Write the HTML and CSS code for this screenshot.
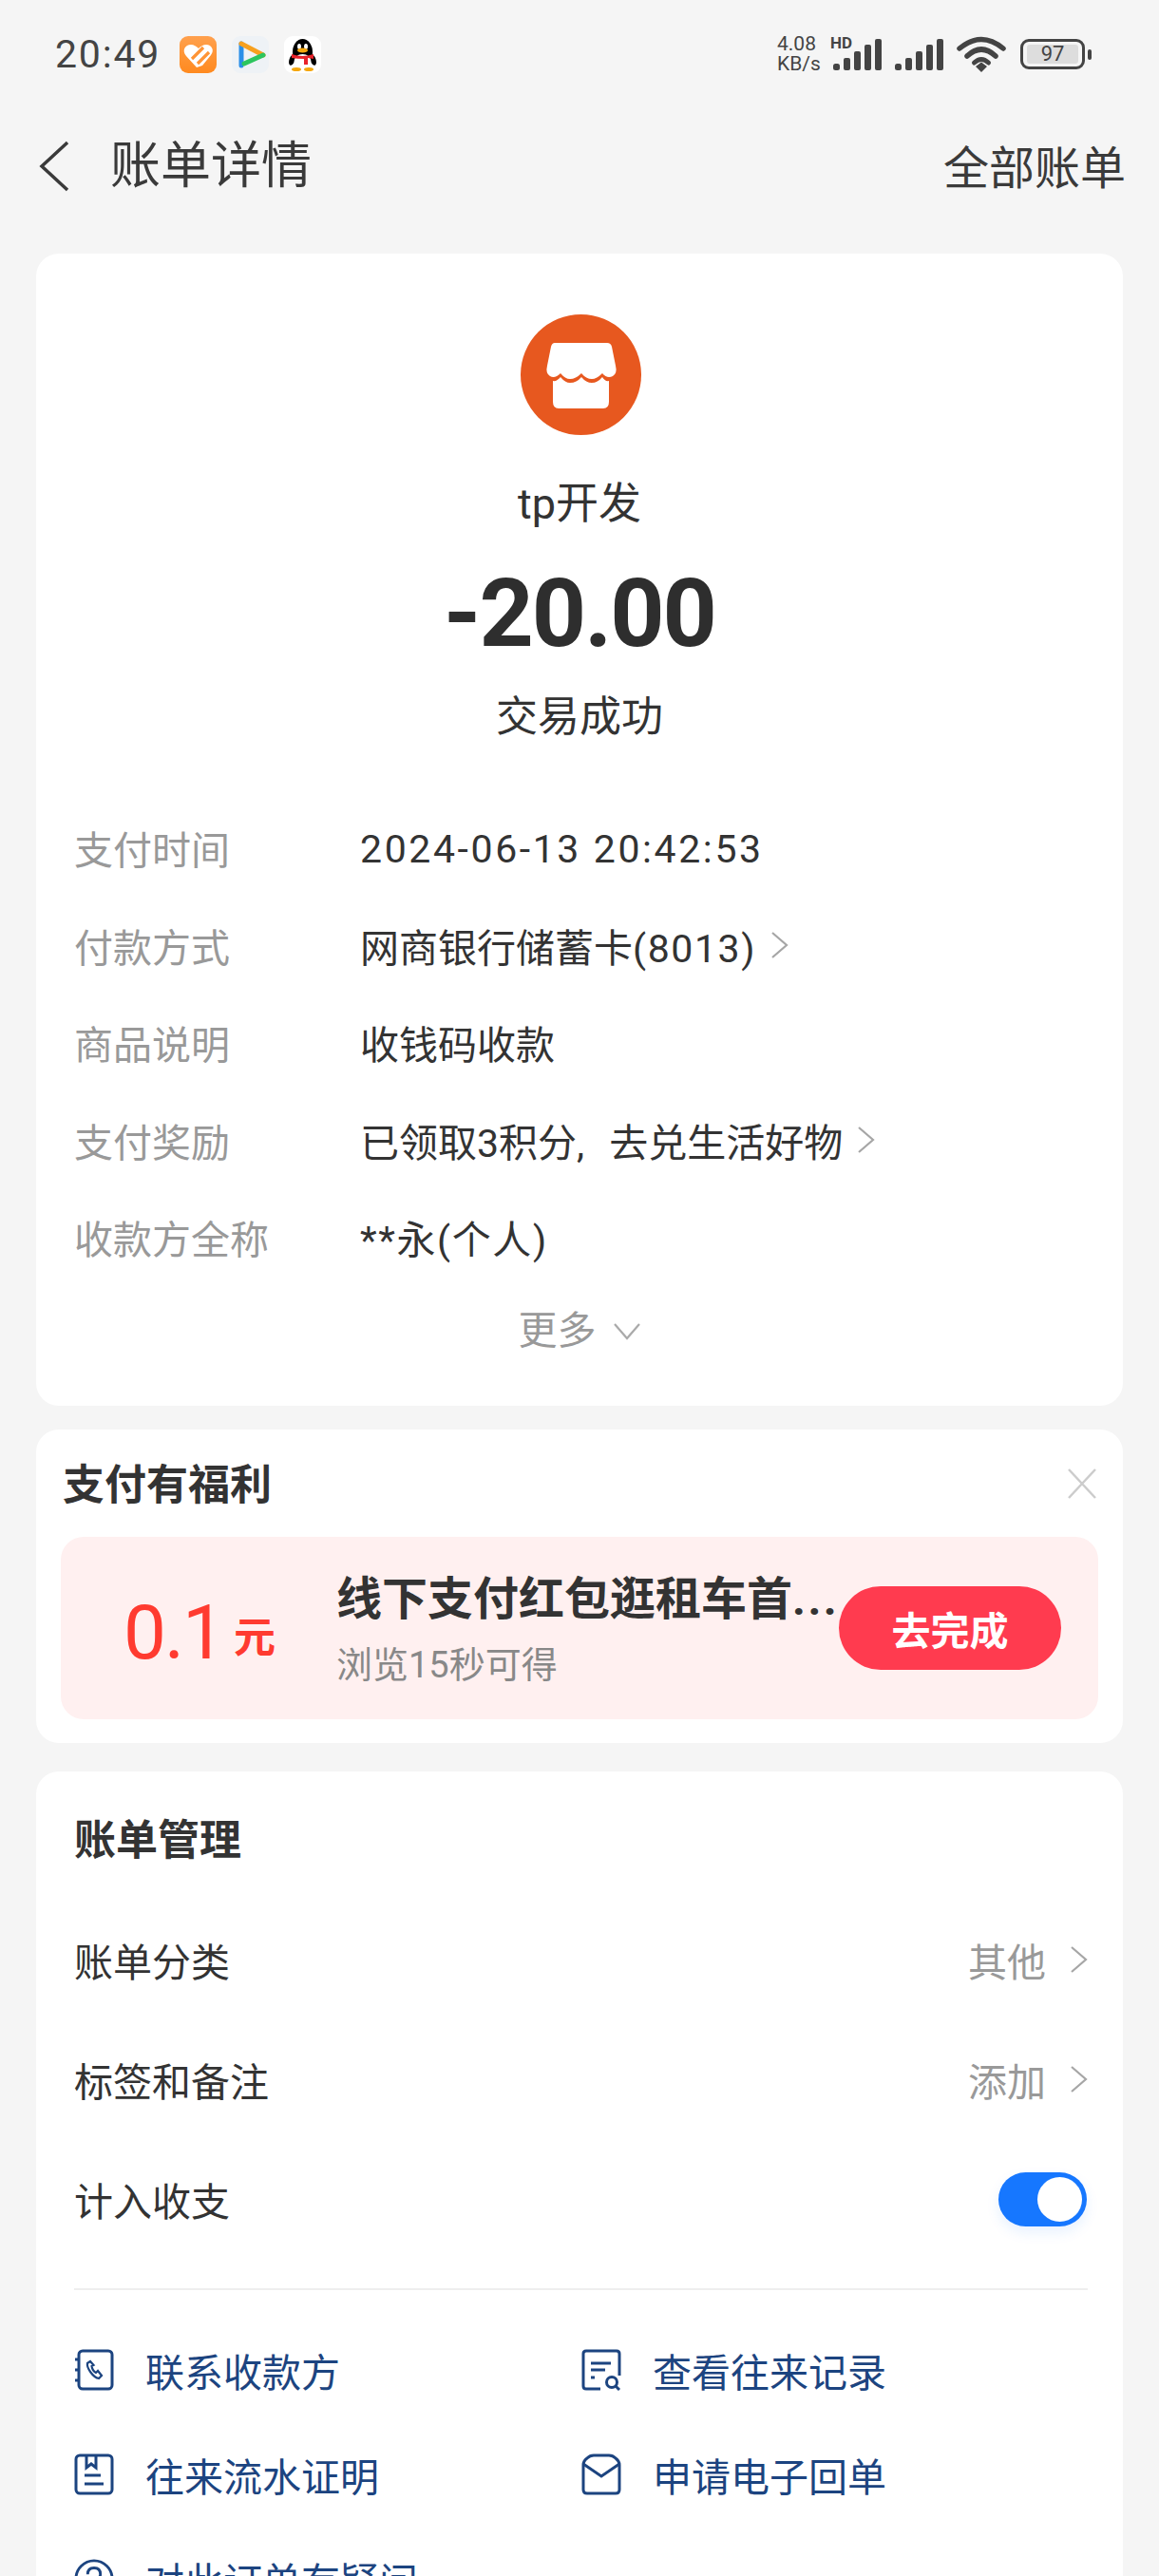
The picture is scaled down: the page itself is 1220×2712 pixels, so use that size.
FILE: index.html
```html
<!DOCTYPE html>
<html lang="zh-CN">
<head>
<meta charset="utf-8">
<title>账单详情</title>
<link rel="stylesheet" href="styles.css">
</head>
<body>
<div class="page">
  <div class="status">
    <div class="status-left">
      <span class="time">20:49</span>
      <svg class="app-icon" viewBox="0 0 39 39"><defs><linearGradient id="og" x1="0" y1="0" x2="0" y2="1"><stop offset="0" stop-color="#ffa04d"/><stop offset="1" stop-color="#ff8a1f"/></linearGradient></defs><rect width="39" height="39" rx="9" fill="url(#og)"/><path d="M18 33 L7 21 C2 15 6 9 12 9 C15 9 18 11 20 13 C22 11 25 9 28 9 C34 9 37 15 33 20 L24 31 Z" fill="#fff"/><path d="M13 24 L25 12 M19 29 L31 17" stroke="#ff9436" stroke-width="3.200"/></svg>
      <svg class="app-icon" viewBox="0 0 39 39"><rect width="39" height="39" rx="9" fill="#eef2f6"/><path d="M10 8 V31" stroke="#2a8fe8" stroke-width="5" stroke-linecap="round"/><path d="M10 8 L33 20" stroke="#f7a01e" stroke-width="5" stroke-linecap="round"/><path d="M13 29 L33 20" stroke="#2cc55e" stroke-width="5" stroke-linecap="round"/></svg>
      <svg class="app-icon" viewBox="0 0 39 39"><rect width="39" height="39" rx="9" fill="#fff"/><ellipse cx="8.5" cy="25" rx="3" ry="6" fill="#000" transform="rotate(20 8.500 25)"/><ellipse cx="30.500" cy="25" rx="3" ry="6" fill="#000" transform="rotate(-20 30.500 25)"/><ellipse cx="19.500" cy="17" rx="10.500" ry="14" fill="#000"/><ellipse cx="19.500" cy="27" rx="9" ry="8" fill="#fff"/><ellipse cx="16" cy="11" rx="2" ry="3" fill="#fff"/><ellipse cx="23" cy="11" rx="2" ry="3" fill="#fff"/><ellipse cx="19.500" cy="15" rx="5.500" ry="2.500" fill="#f5a70c"/><path d="M8 19 Q19.500 23 31 19 V24 L25 23 V30 H21 V24 Q14 24 8 23 Z" fill="#e8222a"/><ellipse cx="13" cy="35" rx="5" ry="2" fill="#f5a70c"/><ellipse cx="26" cy="35" rx="5" ry="2" fill="#f5a70c"/></svg>
    </div>
    <div class="status-right">
      <div class="net"><span>4.08</span><span>KB/s</span></div>
      <div class="signal-wrap">
        <span class="hd">HD</span>
        <svg class="signal" viewBox="0 0 52 33"><rect x="0" y="26" width="7" height="7" rx="2.500"/><rect x="11" y="20" width="7" height="13" rx="2"/><rect x="22" y="13" width="7" height="20" rx="2"/><rect x="33" y="6" width="7" height="27" rx="2"/><rect x="44" y="0" width="7" height="33" rx="2"/></svg>
      </div>
      <svg class="signal" viewBox="0 0 52 33"><rect x="0" y="26" width="7" height="7" rx="2.500"/><rect x="11" y="20" width="7" height="13" rx="2"/><rect x="22" y="13" width="7" height="20" rx="2"/><rect x="33" y="6" width="7" height="27" rx="2"/><rect x="44" y="0" width="7" height="33" rx="2"/></svg>
      <svg class="wifi" viewBox="0 0 52 38"><path d="M3 13 Q26 -6 49 13" fill="none" stroke="#444" stroke-width="5.500" stroke-linecap="round"/><path d="M11 21 Q26 7 41 21" fill="none" stroke="#444" stroke-width="5.500" stroke-linecap="round"/><path d="M18.500 28 Q26 21 33.500 28" fill="none" stroke="#444" stroke-width="5" stroke-linecap="round"/><path d="M20 32 L26 27.500 L32 32 L26 38 Z" fill="#444"/></svg>
      <div class="battery"><span class="battery-fill">97</span></div>
      <span class="battery-nub"></span>
    </div>
  </div>

  <div class="nav">
    <svg class="back" viewBox="0 0 34 54"><path d="M31 2 L4 27 L31 52" fill="none" stroke="#3a3a3a" stroke-width="3.500"/></svg>
    <span class="nav-title">账单详情</span>
    <span class="nav-all">全部账单</span>
  </div>

  <section class="card hero">
    <svg class="logo" viewBox="0 0 127 127"><circle cx="63.500" cy="63.500" r="63.500" fill="#e7581f"/><path d="M36 30 H91 Q95 30 96 34 L100 54 Q102 62 97 65 Q91 68 86 62 Q80 68 75 68 Q69 68 64 62 Q58 68 52 68 Q47 68 42 62 Q36 68 31 65 Q26 62 28 54 L32 34 Q33 30 36 30 Z" fill="#fff"/><path d="M34 70 Q38 71 42 66 Q47 72 52 72 Q59 72 64 66 Q69 72 75 72 Q81 72 86 66 Q89 71 93 70 V92 Q93 99 87 99 H40 Q34 99 34 92 Z" fill="#fff"/></svg>
    <div class="merchant">tp开发</div>
    <div class="amount">-20.00</div>
    <div class="state">交易成功</div>
    <div class="rows">
      <div class="row"><span class="row-label">支付时间</span><span class="row-value date">2024-06-13 20:42:53</span></div>
      <div class="row"><span class="row-label">付款方式</span><span class="row-value">网商银行储蓄卡<span class="wide">(8013)</span></span><svg class="chev" viewBox="0 0 19 28"><path d="M2 1 L17 14 L2 27"/></svg></div>
      <div class="row"><span class="row-label">商品说明</span><span class="row-value">收钱码收款</span></div>
      <div class="row"><span class="row-label">支付奖励</span><span class="row-value">已领取3积分<span class="comma">, </span>去兑生活好物</span><svg class="chev" viewBox="0 0 19 28"><path d="M2 1 L17 14 L2 27"/></svg></div>
      <div class="row"><span class="row-label">收款方全称</span><span class="row-value wide">**永(个人)</span></div>
    </div>
    <div class="more"><span>更多</span><svg class="chev-down" viewBox="0 0 30 20"><path d="M2 3 L15 18 L28 3"/></svg></div>
  </section>

  <section class="card promo">
    <div class="promo-head">
      <span class="promo-title">支付有福利</span>
      <svg class="close" viewBox="0 0 32 34"><path d="M2 2 L30 32 M30 2 L2 32"/></svg>
    </div>
    <div class="offer">
      <div class="offer-amount"><span class="offer-num">0.1</span><span class="offer-unit">元</span></div>
      <div class="offer-text">
        <div class="offer-title">线下支付红包逛租车首<span class="dots">...</span></div>
        <div class="offer-sub">浏览15秒可得</div>
      </div>
      <div class="offer-btn">去完成</div>
    </div>
  </section>

  <section class="card manage">
    <div class="manage-title">账单管理</div>
    <div class="setting"><span>账单分类</span><span class="setting-value">其他</span><svg class="chev setting-chev" viewBox="0 0 19 28"><path d="M2 1 L17 14 L2 27"/></svg></div>
    <div class="setting"><span>标签和备注</span><span class="setting-value">添加</span><svg class="chev setting-chev" viewBox="0 0 19 28"><path d="M2 1 L17 14 L2 27"/></svg></div>
    <div class="setting"><span>计入收支</span><span class="toggle"><span class="knob"></span></span></div>
    <div class="divider"></div>
    <div class="links">
      <div class="link">
        <svg class="link-icon" viewBox="0 0 42 44"><rect x="5" y="2" width="35" height="40" rx="4"/><path d="M1 11 H5 M1 22 H5 M1 33 H5"/><path d="M17 13 L14 15 C13 20 20 30 26 31 L29 28 L25 23 L23 25 C21 24 19 21 18.500 18 L20.500 17 Z" stroke-width="2.200"/></svg>
        <span>联系收款方</span>
      </div>
      <div class="link">
        <svg class="link-icon" viewBox="0 0 42 44"><path d="M20 42 H5 Q2 42 2 39 V5 Q2 2 5 2 H37 Q40 2 40 5 V28"/><path d="M10 15 H31 M10 22 H25 M10 30 H14"/><circle cx="32" cy="35" r="5.500"/><path d="M36 39 L40 43"/></svg>
        <span>查看往来记录</span>
      </div>
      <div class="link">
        <svg class="link-icon" viewBox="0 0 42 44"><rect x="2" y="2" width="38" height="40" rx="4"/><path d="M13 2 V15 L18 11 L23 15 V2"/><path d="M11 23 H28 M11 32 H31"/></svg>
        <span>往来流水证明</span>
      </div>
      <div class="link">
        <svg class="link-icon" viewBox="0 0 42 44"><path d="M2 12 Q2 8 6 5 Q9 2 13 2 H29 Q33 2 36 5 Q40 8 40 12 V38 Q40 42 36 42 H6 Q2 42 2 38 Z"/><path d="M2 11 L21 24 L40 11"/></svg>
        <span>申请电子回单</span>
      </div>
      <div class="link">
        <svg class="link-icon" viewBox="0 0 44 44"><circle cx="22" cy="22" r="20"/><path d="M15 17 Q15 10 22 10 Q29 10 29 17 Q29 21 22 24 V28"/></svg>
        <span>对此订单有疑问</span>
      </div>
    </div>
  </section>
</div>
</body>
</html>
```

FILE: styles.css
```css
* { box-sizing: border-box; }
html, body { margin: 0; padding: 0; }
body { background: #f5f5f5; }
.page {
  width: 1220px;
  height: 2712px;
  overflow: hidden;
  background: #f5f5f5;
  font-family: Roboto, "Noto Sans CJK SC", sans-serif;
  color: #333;
}

/* status bar */
.status {
  height: 114px;
  padding: 0 71px 0 58px;
  display: flex;
  align-items: center;
  justify-content: space-between;
  color: #444;
}
.status-left { display: flex; align-items: center; }
.time { font-size: 41px; letter-spacing: 1.800px; width: 131px; }
.app-icon { width: 39px; height: 39px; margin-right: 16px; }
.status-right { display: flex; align-items: center; }
.net { display: flex; flex-direction: column; width: 59px; font-size: 21px; line-height: 21px; }
.signal-wrap { position: relative; height: 33px; margin-right: 13px; }
.hd { position: absolute; left: -3px; top: -4px; font-size: 17px; line-height: 16px; font-weight: 700; }
.signal { width: 52px; height: 33px; display: block; fill: #444; }
.signal-wrap + .signal { margin-right: 13px; }
.wifi { width: 52px; height: 38px; margin-right: 15px; }
.battery {
  width: 68px;
  height: 32px;
  border: 3px solid #444;
  border-radius: 9px;
  padding: 3px 4px;
  display: flex;
}
.battery-fill {
  flex: 1;
  background: #ddd;
  border-radius: 3px;
  font-size: 22px;
  line-height: 20px;
  text-align: center;
}
.battery-nub { width: 4px; height: 11px; margin-left: 3px; background: #444; border-radius: 2px; }

/* nav */
.nav {
  height: 122px;
  padding: 0 35px 0 40px;
  display: flex;
  align-items: center;
  margin-bottom: 31px;
}
.back { width: 34px; height: 54px; margin-right: 42px; }
.nav-title { font-size: 53px; line-height: 60px; color: #3a3a3a; }
.nav-all { margin-left: auto; font-size: 48px; line-height: 60px; color: #3a3a3a; margin-top: 6px; }

/* cards */
.card { margin: 0 38px; background: #fff; border-radius: 24px; }

.hero { height: 1213px; padding-top: 64px; display: flex; flex-direction: column; align-items: center; }
.logo { width: 127px; height: 127px; margin-left: 2px; flex: none; }
.merchant { font-size: 45px; line-height: 60px; margin-top: 43px; }
.amount { font-size: 100px; line-height: 120px; font-weight: 700; margin-top: 25px; color: #2e2e2e; letter-spacing: -2px; }
.state { font-size: 44px; line-height: 60px; margin-top: 19px; }

.rows { align-self: stretch; margin-top: 56px; padding-left: 40px; }
.row { height: 102.500px; display: flex; align-items: center; font-size: 41px; }
.row-label { width: 301px; color: #999; }
.row-value { color: #333; }
.date { letter-spacing: 2.600px; margin-top: 3px; }
.wide { letter-spacing: 1.600px; }
.comma { letter-spacing: 8px; }
.chev { width: 19px; height: 28px; margin-left: 15px; fill: none; stroke: #a6a6a6; stroke-width: 2.200; }
.more { margin-top: 13px; height: 60px; display: flex; align-items: center; font-size: 41px; color: #999; }
.chev-down { width: 30px; height: 20px; margin-left: 17px; margin-top: 8px; fill: none; stroke: #aaa; stroke-width: 2.200; }

/* promo */
.promo { margin-top: 25px; height: 330px; padding: 0 26px; }
.promo-head { height: 113px; display: flex; align-items: center; justify-content: space-between; padding: 0 1px 3px 2px; }
.promo-title { font-size: 44px; font-weight: 700; color: #333; }
.close { width: 32px; height: 34px; fill: none; stroke: #ccc; stroke-width: 2.500; margin-top: 3px; }
.offer {
  height: 192px;
  background: #fff0f0;
  border-radius: 24px;
  padding: 0 39px 0 66px;
  display: flex;
  align-items: center;
}
.offer-amount { width: 224px; flex: none; color: #ff3b30; display: flex; align-items: center; margin-top: 10px; }
.offer-num { font-size: 80px; line-height: 90px; letter-spacing: -2px; }
.offer-unit { font-size: 44px; line-height: 60px; font-weight: 700; margin-left: 11px; margin-top: 12px; }
.offer-text { flex: 1; min-width: 0; align-self: stretch; padding-top: 36px; }
.offer-title {
  font-size: 48px;
  line-height: 60px;
  font-weight: 700;
  color: #333;
  white-space: nowrap;
}
.dots { letter-spacing: 2.500px; }
.offer-sub { font-size: 38px; line-height: 50px; margin-top: 14px; color: #888; }
.offer-btn {
  width: 234px;
  height: 88px;
  margin-left: 3px;
  flex: none;
  border-radius: 44px;
  background: #ff3b4f;
  color: #fff;
  font-size: 41px;
  font-weight: 700;
  display: flex;
  align-items: center;
  justify-content: center;
}

/* manage */
.manage { margin-top: 30px; padding: 43px 37px 60px 40px; }
.manage-title { font-size: 44px; line-height: 60px; font-weight: 700; color: #333; margin-bottom: 32px; }
.setting { height: 126px; display: flex; align-items: center; font-size: 41px; color: #333; }
.setting-value { margin-left: auto; color: #999; }
.setting .setting-chev { margin-left: 25px; }
.toggle {
  margin-left: auto;
  margin-right: 1px;
  width: 93px;
  height: 57px;
  border-radius: 29px;
  background: #1677ff;
  padding: 5px 5px;
  display: flex;
  justify-content: flex-end;
  box-shadow: 0 6px 14px rgba(22, 119, 255, 0.100);
}
.knob { width: 47px; height: 47px; border-radius: 50%; background: #fff; }
.divider { height: 2px; background: #eee; margin-top: 31px; }
.links { margin-top: 29px; display: grid; grid-template-columns: 534px 1fr; grid-auto-rows: 110px; }
.link { display: flex; align-items: center; font-size: 41px; color: #1c4480; }
.link-icon { width: 42px; height: 44px; margin-right: 33px; fill: none; stroke: #1c4480; stroke-width: 3; flex: none; }
```
